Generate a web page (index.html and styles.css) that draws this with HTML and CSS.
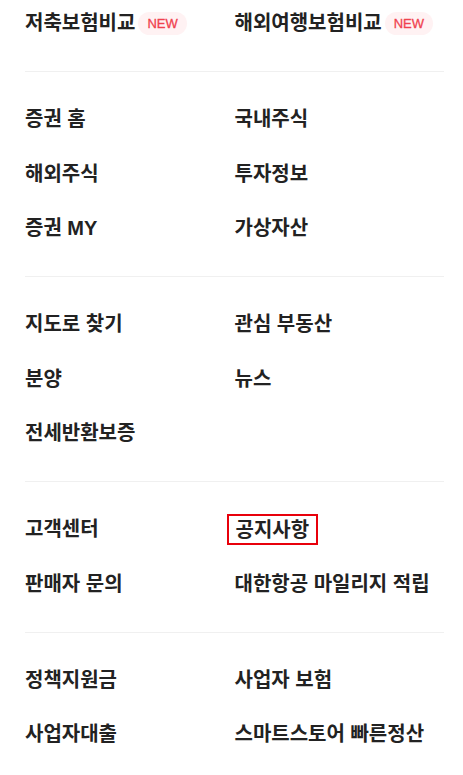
FILE: index.html
```html
<!DOCTYPE html>
<html lang="ko">
<head>
<meta charset="utf-8">
<link rel="stylesheet" href="styles.css">
<title>메뉴</title>
</head>
<body>
<div class="menu">
  <section class="group">
    <a class="item"><span class="label">저축보험비교</span><span class="badge">NEW</span></a>
    <a class="item"><span class="label">해외여행보험비교</span><span class="badge">NEW</span></a>
  </section>
  <section class="group">
    <a class="item"><span class="label">증권 홈</span></a>
    <a class="item"><span class="label">국내주식</span></a>
    <a class="item"><span class="label">해외주식</span></a>
    <a class="item"><span class="label">투자정보</span></a>
    <a class="item"><span class="label">증권 MY</span></a>
    <a class="item"><span class="label">가상자산</span></a>
  </section>
  <section class="group">
    <a class="item"><span class="label">지도로 찾기</span></a>
    <a class="item"><span class="label">관심 부동산</span></a>
    <a class="item"><span class="label">분양</span></a>
    <a class="item"><span class="label">뉴스</span></a>
    <a class="item"><span class="label">전세반환보증</span></a>
  </section>
  <section class="group">
    <a class="item"><span class="label">고객센터</span></a>
    <a class="item"><span class="label highlight">공지사항</span></a>
    <a class="item"><span class="label">판매자 문의</span></a>
    <a class="item"><span class="label">대한항공 마일리지 적립</span></a>
  </section>
  <section class="group">
    <a class="item"><span class="label">정책지원금</span></a>
    <a class="item"><span class="label">사업자 보험</span></a>
    <a class="item"><span class="label">사업자대출</span></a>
    <a class="item"><span class="label">스마트스토어 빠른정산</span></a>
  </section>
</div>
</body>
</html>
```
FILE: styles.css
```css
html, body {
  margin: 0;
  padding: 0;
  background: #ffffff;
}
body {
  font-family: "Liberation Sans", "Noto Sans CJK KR", sans-serif;
  color: #222222;
}
.menu {
  padding: 0 19px 0 25px;
}
.group {
  display: grid;
  grid-template-columns: 209.5px 1fr;
  row-gap: 12.5px;
  padding: 24px 0 29px;
  border-bottom: 1px solid #f0f0f0;
}
.group:first-child {
  padding-top: 0;
}
.group:last-child {
  border-bottom: none;
}
.item {
  height: 42px;
  display: flex;
  align-items: center;
  text-decoration: none;
  color: inherit;
  white-space: nowrap;
}
.label {
  font-size: 20px;
  font-weight: 700;
  line-height: 24px;
  position: relative;
  top: 2px;
}
.highlight {
  outline: 2px solid #e8000b;
  outline-offset: 0;
  padding: 2px 7px 1px;
  margin: 0 -6px;
}
.badge {
  display: inline-flex;
  align-items: center;
  height: 23px;
  padding: 0 9px;
  margin-left: 3px;
  border-radius: 12px;
  background: #fff2f3;
  color: #f0424f;
  font-size: 13px;
  font-weight: 400;
  -webkit-text-stroke: 0.3px #f0424f;
  position: relative;
  top: 2px;
}
```
